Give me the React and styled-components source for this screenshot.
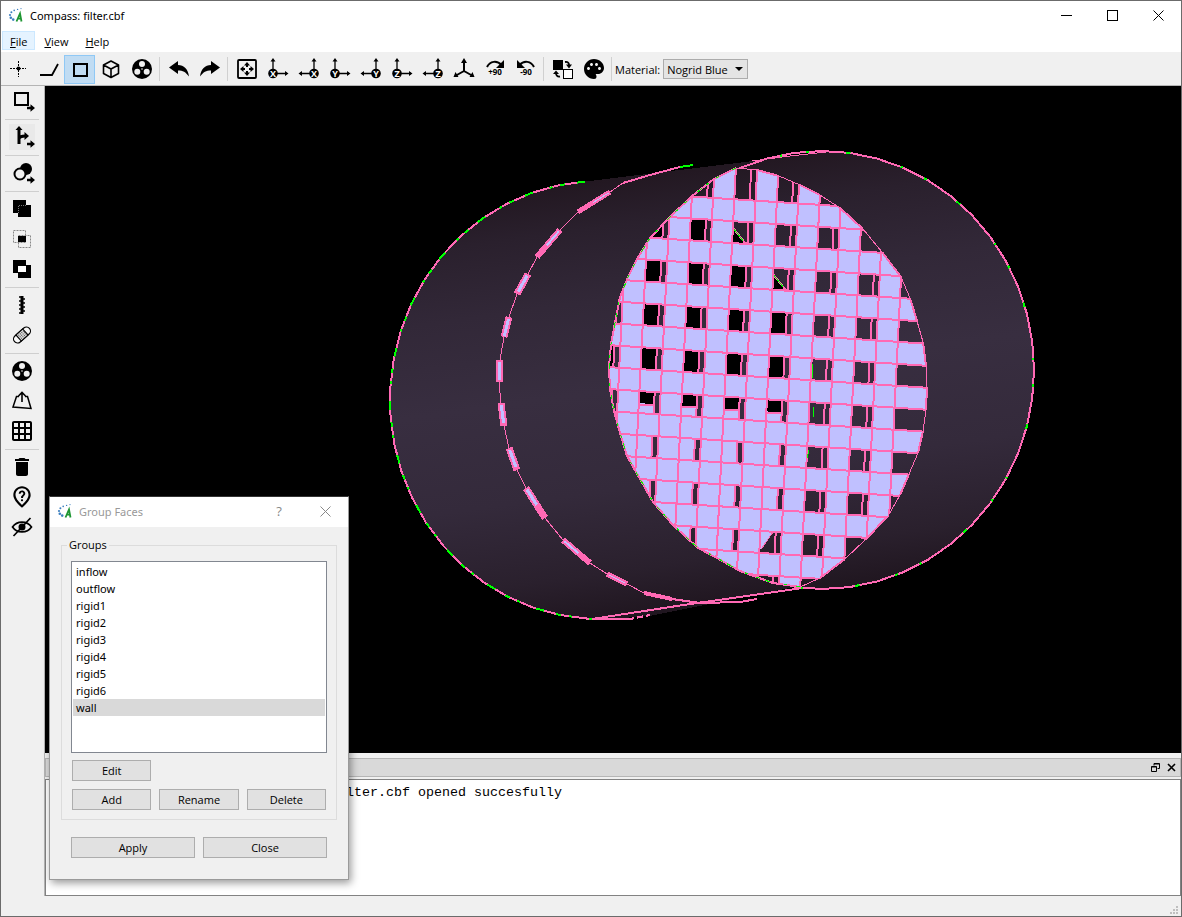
// src/App.jsx
import React, { useState } from 'react';
import styled, { createGlobalStyle } from 'styled-components';
import { MdPalette, MdDelete, MdGridOn, MdOutlineNotListedLocation } from 'react-icons/md';

const PINK = '#ff69b4';
const GREEN = '#00ff00';
const LILAC = '#c0c0ff';

/* ---------- icons ---------- */

const Icon = ({ children }) => (
  <svg width="24" height="24" viewBox="0 0 24 24" fill="none" stroke="#000" strokeWidth="2" overflow="visible" aria-hidden="true">
    {children}
  </svg>
);

const Logo = () => (
  <svg width="16" height="16" viewBox="0 0 16 16" aria-hidden="true">
    <g fill="#3c7fbf">
      <circle cx="5.2" cy="12.6" r="1.3" />
      <circle cx="2.8" cy="10.8" r="1.3" />
      <circle cx="2" cy="8" r="1.1" />
      <circle cx="3.4" cy="5.2" r="1" />
      <circle cx="6.2" cy="3.4" r=".8" />
      <circle cx="9.6" cy="2.4" r=".7" />
      <circle cx="13" cy="1.6" r=".6" />
    </g>
    <path d="M8.5 14.5L12 6.5L13.5 14.5M10 11.6H13" fill="none" stroke="#1e9632" strokeWidth="1.8" />
  </svg>
);

const PointIcon = () => (
  <Icon>
    <path d="M4 11.5h16M12.5 4v16" strokeWidth="1" strokeDasharray="2 1 2 1 5 1 2 1 2" />
    <circle cx="12.5" cy="11.5" r="2" fill="#000" stroke="none" />
  </Icon>
);
const LineIcon = () => <Icon><path d="M3 18h12L21 7" strokeWidth="1.8" /></Icon>;
const FaceIcon = () => <Icon><rect x="6" y="7" width="13" height="12" /></Icon>;
const CubeIcon = () => (
  <Icon>
    <path d="M12 4L19.5 8V16.5L12 20.5L4.5 16.5V8ZM4.5 8L12 12L19.5 8M12 12V20.5" strokeWidth="1.6" strokeLinejoin="round" />
  </Icon>
);
const GroupIcon = () => (
  <Icon>
    <circle cx="12" cy="12" r="10" fill="#000" stroke="none" />
    <g fill="#f0f0f0" stroke="none">
      <circle cx="12" cy="7" r="3" />
      <circle cx="7.3" cy="14.7" r="3" />
      <circle cx="16.7" cy="14.7" r="3" />
      <circle cx="12" cy="12" r=".8" />
    </g>
  </Icon>
);
const TurnIcon = ({ redo }) => (
  <Icon>
    <path
      transform={redo ? 'matrix(-1 0 0 1 24 0)' : undefined}
      d="M2 10.5L11 4V8C17 8 21 12 22 19.5C18.5 15 16 13.5 11 13.5V17Z"
      fill="#000"
      stroke="none"
    />
  </Icon>
);
const FitIcon = () => (
  <Icon>
    <rect x="3" y="3" width="18" height="18" rx="1" strokeWidth="1.8" />
    <path d="M12 5l3 3.5h-6zM12 19l3-3.5h-6zM5 12l3.5-3v6zM19 12l-3.5-3v6z" fill="#000" stroke="none" />
    <path d="M12 8v2M12 14v2M8 12h2M14 12h2" />
  </Icon>
);
const AxisIcon = ({ name, flip }) => (
  <Icon>
    <g transform={flip ? 'matrix(-1 0 0 1 24 0)' : undefined}>
      <path d="M7 16V3M7 16.5H21" strokeWidth="1.3" />
      <path d="M7 1l2.5 3.5h-5zM22.5 16.5L19 14v5z" fill="#000" stroke="none" />
      <circle cx="7" cy="16.5" r="4.8" fill="#000" stroke="none" />
    </g>
    <AxisName x={flip ? 17 : 7} y="20">{name}</AxisName>
  </Icon>
);
const IsoIcon = () => (
  <Icon>
    <path d="M12 14V4M12 14L4 18.5M12 14L20 18.5" />
    <path d="M12 1l3 5h-6zM1.5 20l2-5 3 5zM22.5 20l-2-5-3 5z" fill="#000" stroke="none" />
  </Icon>
);
const RotateIcon = ({ back }) => (
  <Icon>
    <g transform={back ? 'matrix(-1 0 0 1 24 0)' : undefined}>
      <path d="M4 10C7 4 14 3 18.5 8" />
      <path d="M21 3v8h-8z" fill="#000" stroke="none" />
    </g>
    <Degrees x="12" y="18">{back ? '-90' : '+90'}</Degrees>
  </Icon>
);
const SwapIcon = () => (
  <Icon>
    <rect x="2" y="3" width="10" height="10" fill="#000" stroke="none" />
    <rect x="12.5" y="12.5" width="9" height="9" fill="#fff" strokeWidth="1" />
    <path d="M14 5C17 4.5 18 6 18 8M9 19.5C6 20 5 18 5 16" strokeWidth="1.8" />
    <path d="M15 7.5h6l-3 4zM2 17h6l-3-3.5z" fill="#000" stroke="none" />
  </Icon>
);

const AddArrow = () => <path d="M17 17.7h3.5v-2.5l4.5 3.8-4.5 3.8v-2.5h-3.5z" fill="#000" stroke="none" />;
const AddFaceIcon = () => <Icon><rect x="5" y="4" width="13" height="12" /><AddArrow /></Icon>;
const BranchIcon = () => (
  <Icon>
    <path d="M9 19V4M9 13.5C10 11.5 12 11 15 11" strokeWidth="3" />
    <path d="M9 1l3.5 4h-7zM19 11L14.5 7v8z" fill="#000" stroke="none" />
    <AddArrow />
  </Icon>
);
const CirclesIcon = () => (
  <Icon>
    <circle cx="16" cy="8" r="6" fill="#000" stroke="none" />
    <circle cx="10" cy="13" r="5.5" fill="#f0f0f0" />
    <AddArrow />
  </Icon>
);
const UnionIcon = () => (
  <Icon>
    <path d="M3 3h13v5h5v12h-13v-4h-5z" fill="#000" stroke="none" />
    <path d="M8.5 16V8.5H16" stroke="#777" strokeWidth="1" strokeDasharray="1 1" />
  </Icon>
);
const IntersectIcon = () => (
  <Icon>
    <path d="M3.5 3.5h12v12h-12zM8.5 8.5h12v12h-12z" stroke="#888" strokeWidth="1" strokeDasharray="2 1" />
    <rect x="8" y="9" width="8" height="6" fill="#000" stroke="none" />
  </Icon>
);
const DifferenceIcon = () => (
  <Icon>
    <path d="M3 3h13v5h5v13h-13v-5h-5z" fill="#000" stroke="none" />
    <rect x="8" y="9" width="8" height="6" fill="#fff" stroke="none" />
  </Icon>
);
const SpringIcon = () => (
  <Icon>
    <path d="M12 3v18" strokeWidth="3" />
    <path d="M9 4h3M9 8h3M9 12h3M9 16h3M9 20h3M12 6h3M12 10h3M12 14h3M12 18h3" strokeWidth="1.6" />
  </Icon>
);
const BandageIcon = () => (
  <Icon>
    <g transform="rotate(-42 12 12)" strokeWidth="1.2">
      <rect x="2" y="8" width="20" height="8" rx="4" fill="#f8f8f8" />
      <rect x="7.5" y="8" width="9" height="8" fill="#ddd" />
      <path d="M9 10h7M9 12h7M9 14h7" stroke="#555" strokeDasharray="1 1" />
    </g>
  </Icon>
);
const ExtrudeIcon = () => (
  <Icon>
    <path d="M9 7.5H6.5L3 18L21 19.5L17.5 7.5H15" strokeWidth="1.5" />
    <path d="M12 13V4M8.5 7L12 3.5L15.5 7" strokeWidth="1.6" />
  </Icon>
);
const HideIcon = () => (
  <Icon>
    <path d="M2.5 12C7 5.5 17 5.5 21.5 12C17 18.5 7 18.5 2.5 12Z" strokeWidth="1.7" />
    <circle cx="12" cy="12" r="3.5" fill="#000" stroke="none" />
    <path d="M3.5 21L20.5 3" strokeWidth="1.7" />
  </Icon>
);

/* ---------- 3D model ---------- */

// faceted ellipse arc, angles in degrees
const arc = (cx, cy, rx, ry, from, to, step = 7.5) => {
  const pts = [];
  for (let a = from; a <= to; a += step) {
    const r = (a * Math.PI) / 180;
    pts.push([cx + rx * Math.cos(r), cy + ry * Math.sin(r)]);
  }
  return pts;
};
const join = (pts) => pts.map((p) => p.map((n) => n.toFixed(1)).join(',')).join(' ');

// point of the wire mesh for column k, row j
const mesh = (k, j) => {
  let y = 178.7 + 22 * j;
  let x = 0;
  for (let n = 0; n < 3; n++) {
    x = 599.3 + 21.33 * k - 0.05 * (y - 340);
    y = 178.7 + 22 * j + 0.065 * (x - 756.7);
  }
  return [x, y];
};
const quad = (k0, k1, j0, j1) => join([mesh(k0, j0), mesh(k1, j0), mesh(k1, j1), mesh(k0, j1)]);

const backRim = arc(600, 400, 210, 219, 86, 266);
const backTail = [[592, 619], [630, 619], [650, 615]];
const frontRim = arc(822, 370, 212, 219, -127.5, 97.5);
const shell = [...backRim, [835, 151], ...arc(822, 370, 212, 219, -82.5, 97.5), [650, 616]];

const filterRight = [
  [736, 168], [757, 170], [779, 176], [800, 185], [820, 195], [840, 208], [863, 229], [882, 252],
  [901, 277], [910, 298], [917, 321], [923, 342], [926, 366], [927, 387], [926, 410], [923, 431],
  [918, 453], [909, 474], [900, 495], [888, 516], [865, 540], [845, 559], [820, 578], [800, 587],
];
const filterLeft = [
  [800, 587], [773, 583], [740, 571], [717, 558], [698, 548], [673, 525], [653, 502], [640, 479],
  [627, 456], [620, 433], [614, 411], [610, 389], [609, 367], [611, 344], [615, 323], [620, 297],
  [628, 277], [637, 259], [650, 238], [670, 217], [692, 196], [714, 179], [736, 168],
];
// edges of the right side where a wire ends
const wireEnds = [1, 3, 5, 7, 9, 11, 13, 15, 17, 19, 21];

const ring = [
  [693, 165], [680, 167], [650, 175], [623, 183], [610, 192], [578, 212], [560, 230], [537, 257], [528, 274],
  [517, 294], [509, 317], [504, 337], [500, 360], [499, 382], [501, 403], [504, 426], [509, 448], [517, 470],
  [526, 488], [545, 518], [563, 540], [590, 563], [607, 574], [627, 584], [644, 593], [672, 599], [700, 603],
  [740, 602], [757, 599],
];
// [index in ring, width of the wire end]
const ringWires = [[4, 5], [6, 6], [8, 7], [10, 7], [12, 7], [14, 7], [16, 7], [18, 7], [20, 6], [22, 5], [24, 4]];

const holes = [];
for (let j = 0; j <= 18; j += 2) {
  for (let k = 0; k <= 14; k += 2) {
    let kind = 'dark';
    if ((j === 2 && k <= 4) || (j === 4 && k <= 6) || ((j === 6 || j === 8) && k <= 8)) kind = 'black';
    if (j === 10 && k <= 8) kind = 'half';
    if ((j === 12 || j === 14) && k <= 8) kind = 'wire';
    if (j === 16 && k <= 6) kind = 'wire';
    if ((j === 2 && k === 6) || (j === 4 && k === 8)) kind = 'corner';
    if (j === 16 && k === 8) kind = 'slant';
    holes.push({ j, k, kind });
  }
}

const Hole = ({ j, k, kind }) => {
  const top = j === 0 ? -2 : j;
  const open = k === 14 || (k === 12 && (j === 2 || j === 16));
  const [sx1, sy1] = mesh(k + 0.72, top);
  const [sx2, sy2] = mesh(k + 0.72, j + 1);
  return (
    <g>
      <polygon points={quad(k, open ? 16 : k + 1, top, j + 1)} fill="url(#shell)" />
      {kind === 'black' && <polygon points={quad(k, k + 0.7, j, j + 1)} fill="#000" />}
      {(kind === 'wire' || kind === 'half') && <polygon points={quad(k, k + 0.7, j, j + 1)} fill={LILAC} />}
      {kind === 'half' && (
        <>
          <polygon points={quad(k, k + 0.7, j, j + 0.55)} fill="#000" />
          <polyline points={join([mesh(k, j + 0.62), mesh(k + 0.7, j + 0.58)])} stroke={PINK} strokeWidth="2" />
        </>
      )}
      {kind === 'corner' && (
        <>
          <polygon points={join([mesh(k, j + 0.3), mesh(k + 0.65, j + 1), mesh(k, j + 1)])} fill="#000" />
          <polyline points={join([mesh(k, j + 0.3), mesh(k + 0.65, j + 1)])} stroke={PINK} strokeWidth="2" />
          <polyline points={join([mesh(k, j + 0.3), mesh(k + 0.5, j + 0.85)])} stroke={GREEN} />
        </>
      )}
      {kind === 'slant' && (
        <>
          <polygon points={join([mesh(k, j), mesh(k + 0.6, j), mesh(k + 0.1, j + 0.8), mesh(k, j + 0.8)])} fill={LILAC} />
          <polyline points={join([mesh(k + 0.6, j), mesh(k + 0.1, j + 0.8)])} stroke={PINK} />
        </>
      )}
      {!open && <line x1={sx1} y1={sy1} x2={sx2} y2={sy2} stroke={PINK} strokeWidth="2" />}
    </g>
  );
};

const Model = () => (
  <ModelSvg viewBox="45 86 1136 667" shapeRendering="crispEdges" fill="none" role="img" aria-label="filter.cbf">
    <defs>
      <linearGradient id="shell" gradientUnits="userSpaceOnUse" x1="690" y1="160" x2="752" y2="608">
        <stop offset="0" stopColor="#21161f" />
        <stop offset=".12" stopColor="#2a202d" />
        <stop offset=".28" stopColor="#322838" />
        <stop offset=".48" stopColor="#382e40" />
        <stop offset=".7" stopColor="#342a3b" />
        <stop offset=".88" stopColor="#2a202d" />
        <stop offset="1" stopColor="#1e141d" />
      </linearGradient>
      <clipPath id="filter"><polygon points={join([...filterRight, ...filterLeft])} /></clipPath>
    </defs>

    <polygon points={join(shell)} fill="url(#shell)" />

    <polyline points={join(backRim)} stroke={PINK} strokeWidth="2" />
    <polyline points={join(backRim)} stroke={GREEN} strokeWidth="2" strokeDasharray="5 12 9 17 3 8" />
    <polyline points={join(backTail)} stroke={PINK} strokeWidth="2" strokeDasharray="42 3 6 3" />
    <polyline points="592,619 690,604 803,588" stroke={PINK} strokeWidth="2" />

    <polyline points={join(ring)} stroke={PINK} />
    <polyline points={join(ring.slice(0, 4))} stroke={PINK} strokeWidth="2" />
    <polyline points={join(ring.slice(-4))} stroke={PINK} strokeWidth="2" />
    <polyline points="680,167 693,165" stroke={GREEN} strokeWidth="2" />
    {ringWires.map(([i, w]) => (
      <g key={i}>
        <polyline points={join(ring.slice(i, i + 2))} stroke={PINK} strokeWidth={w} />
        <polyline points={join(ring.slice(i, i + 2))} stroke={LILAC} strokeWidth={w - 4} strokeDasharray="0 2 18 200" />
      </g>
    ))}

    <polyline points={join(frontRim)} stroke={PINK} strokeWidth="2" />
    <polyline points={join(frontRim)} stroke={GREEN} strokeWidth="2" strokeDasharray="3 37 5 52 2 24" />
    <polyline points="752,161 790,156 835,151" stroke={PINK} />

    <g clipPath="url(#filter)">
      <rect x="600" y="160" width="335" height="435" fill={LILAC} />
      {holes.map((h) => <Hole key={`${h.j}-${h.k}`} {...h} />)}
      {Array.from({ length: 18 }, (_, i) => (
        <polyline key={i} points={join([mesh(-1, i + 1), mesh(16, i + 1)])} stroke={PINK} strokeWidth="2" />
      ))}
      {Array.from({ length: 14 }, (_, i) => (
        <polyline key={i} points={join([mesh(i + 1, -2), mesh(i + 1, 20)])} stroke={PINK} strokeWidth="2" />
      ))}
      <path d="M812 364l1 14M813 407l1 10M809 450l-2 8" stroke={GREEN} />
    </g>
    <polyline points={join(filterLeft)} stroke={PINK} strokeWidth="2" />
    <polyline points={join(filterLeft)} stroke={GREEN} strokeDasharray="4 9 3 14 6 5" />
    <polyline points={join(filterRight)} stroke={PINK} />
    {wireEnds.map((i) => (
      <polyline key={i} points={join(filterRight.slice(i, i + 2))} stroke={PINK} strokeWidth="2" />
    ))}
  </ModelSvg>
);

/* ---------- data ---------- */

const TOOLS = [
  [
    ['Select points', <PointIcon />], ['Select edges', <LineIcon />], ['Select faces', <FaceIcon />],
    ['Select solids', <CubeIcon />], ['Select groups', <GroupIcon />],
  ],
  [['Undo', <TurnIcon />], ['Redo', <TurnIcon redo />]],
  [
    ['Fit all', <FitIcon />],
    ['View +X', <AxisIcon name="X" />], ['View -X', <AxisIcon name="X" flip />],
    ['View +Y', <AxisIcon name="Y" />], ['View -Y', <AxisIcon name="Y" flip />],
    ['View +Z', <AxisIcon name="Z" />], ['View -Z', <AxisIcon name="Z" flip />],
    ['Isometric', <IsoIcon />], ['Rotate +90', <RotateIcon />], ['Rotate -90', <RotateIcon back />],
  ],
  [['Swap colors', <SwapIcon />], ['Palette', <MdPalette size={24} />]],
];

const SIDE_TOOLS = [
  [['Add face', <AddFaceIcon />]],
  [['Branch', <BranchIcon />]],
  [['Add shape', <CirclesIcon />]],
  [['Union', <UnionIcon />], ['Intersection', <IntersectIcon />], ['Difference', <DifferenceIcon />]],
  [['Sew', <SpringIcon />], ['Heal', <BandageIcon />]],
  [['Group faces', <GroupIcon />], ['Extrude', <ExtrudeIcon />], ['Mesh', <MdGridOn size={24} />]],
  [['Delete', <MdDelete size={24} />], ['Locate', <MdOutlineNotListedLocation size={26} />], ['Hide', <HideIcon />]],
];

const GROUPS = ['inflow', 'outflow', 'rigid1', 'rigid2', 'rigid3', 'rigid4', 'rigid5', 'rigid6', 'wall'];

const App = () => {
  const [mode, setMode] = useState('Select faces');
  const [group, setGroup] = useState('wall');
  const [material, setMaterial] = useState('Nogrid Blue');

  return (
    <>
      <GlobalStyle />
      <Window>
        <TitleBar>
          <Logo />
          <Title>Compass: filter.cbf</Title>
          <WindowButton aria-label="Minimize">
            <svg width="11" height="11"><path d="M0 5.5h11" stroke="#000" /></svg>
          </WindowButton>
          <WindowButton aria-label="Maximize">
            <svg width="11" height="11"><rect x=".5" y=".5" width="10" height="10" fill="none" stroke="#000" /></svg>
          </WindowButton>
          <WindowButton aria-label="Close">
            <svg width="11" height="11"><path d="M.5 .5l10 10M10.5 .5l-10 10" stroke="#000" /></svg>
          </WindowButton>
        </TitleBar>

        <MenuBar>
          <MenuItem $active><u>F</u>ile</MenuItem>
          <MenuItem><u>V</u>iew</MenuItem>
          <MenuItem><u>H</u>elp</MenuItem>
        </MenuBar>

        <ToolBar>
          {TOOLS.map((tools, i) => (
            <React.Fragment key={i}>
              {tools.map(([label, icon]) => (
                <ToolButton
                  key={label}
                  aria-label={label}
                  $active={mode === label}
                  onClick={() => label.startsWith('Select') && setMode(label)}
                >
                  {icon}
                </ToolButton>
              ))}
              <Separator />
            </React.Fragment>
          ))}
          <MaterialLabel htmlFor="material">Material:</MaterialLabel>
          <Combo>
            <ComboSelect id="material" value={material} onChange={(e) => setMaterial(e.target.value)}>
              <option>Nogrid Blue</option>
            </ComboSelect>
            <ComboArrow width="8" height="4"><path d="M0 0h8l-4 4z" /></ComboArrow>
          </Combo>
        </ToolBar>

        <Workspace>
          <SideBar>
            {SIDE_TOOLS.map((tools, i) => (
              <React.Fragment key={i}>
                {i > 0 && <SideSeparator />}
                {tools.map(([label, icon]) => (
                  <SideButton key={label} aria-label={label} $hover={label === 'Branch'}>{icon}</SideButton>
                ))}
              </React.Fragment>
            ))}
          </SideBar>

          <Main>
            <Viewport><Model /></Viewport>
            <DockTitle>
              <DockButton aria-label="Float">
                <svg width="9" height="9" fill="none" stroke="#000"><path d="M3 1h5.5M3 .5h5.5v5h-2M3 .5v2M.5 3.5h5v5h-5zM.5 4h5" /></svg>
              </DockButton>
              <DockButton aria-label="Close console">
                <svg width="9" height="9"><path d="M1 1l7 7M8 1l-7 7" stroke="#000" strokeWidth="1.6" /></svg>
              </DockButton>
            </DockTitle>
            <Console>filter.cbf opened succesfully</Console>
          </Main>
        </Workspace>

        <StatusBar>
          <svg width="9" height="9" fill="#bfbfbf">
            <path d="M6 0h2v2h-2zM3 3h2v2h-2zM6 3h2v2h-2zM0 6h2v2h-2zM3 6h2v2h-2zM6 6h2v2h-2z" />
          </svg>
        </StatusBar>

        <Dialog role="dialog" aria-label="Group Faces">
          <DialogTitle>
            <Logo />
            <Title $muted>Group Faces</Title>
            <DialogTitleButton>?</DialogTitleButton>
            <DialogTitleButton aria-label="Close dialog">
              <svg width="11" height="11"><path d="M.5 .5l10 10M10.5 .5l-10 10" stroke="#888" /></svg>
            </DialogTitleButton>
          </DialogTitle>
          <DialogBody>
            <GroupBox>
              <GroupLegend>Groups</GroupLegend>
              <List role="listbox" aria-label="Groups">
                {GROUPS.map((name) => (
                  <ListItem key={name} role="option" aria-selected={group === name} $selected={group === name} onClick={() => setGroup(name)}>
                    {name}
                  </ListItem>
                ))}
              </List>
              <ButtonGrid>
                <EditButton>Edit</EditButton>
                <Button>Add</Button>
                <Button>Rename</Button>
                <Button>Delete</Button>
              </ButtonGrid>
            </GroupBox>
            <DialogActions>
              <Button>Apply</Button>
              <Button>Close</Button>
            </DialogActions>
          </DialogBody>
        </Dialog>
      </Window>
    </>
  );
};

export default App;

const GlobalStyle = createGlobalStyle`
  * {
    box-sizing: border-box;
  }
  body {
    margin: 0;
    font-family: 'Open Sans', 'Noto Sans', sans-serif;
    font-size: 11px;
    color: #000;
  }
  button, select {
    font: inherit;
    color: inherit;
    padding: 0;
    border: none;
    background: none;
  }
  svg {
    flex-shrink: 0;
  }
`;

const AxisName = styled.text`
  font-size: 9px;
  font-weight: bold;
  text-anchor: middle;
  fill: #fff;
  stroke: none;
`;

const Degrees = styled.text`
  font-size: 8px;
  font-weight: bold;
  text-anchor: middle;
  fill: #000;
  stroke: none;
`;

const Window = styled.div`
  position: relative;
  display: flex;
  flex-direction: column;
  min-height: 100vh;
  border: 1px solid #6b6b6b;
  background: #f0f0f0;
`;

const TitleBar = styled.header`
  display: flex;
  align-items: center;
  height: 30px;
  padding: 0 0 2px 7px;
  background: #fff;
`;

const Title = styled.span`
  flex: 1;
  padding-left: 6px;
  font-family: 'Noto Sans', sans-serif;
  color: ${(props) => (props.$muted ? '#999' : '#000')};
`;

const WindowButton = styled.button`
  display: flex;
  align-items: center;
  justify-content: center;
  width: 46px;
  height: 28px;
`;

const MenuBar = styled.nav`
  display: flex;
  height: 22px;
  padding: 0 1px 2px;
  background: #fff;
  border-bottom: 1px solid #f0f0f0;
`;

const MenuItem = styled.button`
  padding: 2px 7px 0;
  margin-right: 1px;
  line-height: 16px;
  border: 1px solid ${(props) => (props.$active ? '#cce8ff' : 'transparent')};
  background: ${(props) => (props.$active ? '#e5f3ff' : 'transparent')};
`;

const ToolBar = styled.div`
  display: flex;
  align-items: center;
  height: 33px;
  padding-left: 1px;
  border-bottom: 1px solid #b4b4b4;
`;

const ToolButton = styled.button`
  display: flex;
  align-items: center;
  justify-content: center;
  width: 31px;
  height: 29px;
  border: 1px solid ${(props) => (props.$active ? '#8fc8f5' : 'transparent')};
  background: ${(props) => (props.$active ? '#c0dcf3' : 'transparent')};
`;

const Separator = styled.div`
  width: 1px;
  height: 24px;
  margin: 0 3px 0 2px;
  background: #d0d0d0;
`;

const MaterialLabel = styled.label`
  margin-right: 3px;
`;

const Combo = styled.div`
  position: relative;
`;

const ComboSelect = styled.select`
  appearance: none;
  display: block;
  width: 85px;
  height: 20px;
  padding-left: 3px;
  border: 1px solid #acacac;
  border-radius: 0;
  background: #e4e4e4;
`;

const ComboArrow = styled.svg`
  position: absolute;
  right: 5px;
  top: 8px;
  pointer-events: none;
`;

const Workspace = styled.div`
  flex: 1;
  display: flex;
`;

const SideBar = styled.div`
  display: flex;
  flex-direction: column;
  align-items: center;
  width: 44px;
  padding-right: 2px;
  border-right: 1px solid #b4b4b4;
`;

const SideButton = styled.button`
  display: flex;
  align-items: center;
  justify-content: center;
  width: 26px;
  height: 26px;
  margin: 2px 0;
  background: ${(props) => (props.$hover ? '#e9e9e9' : 'transparent')};
`;

const SideSeparator = styled.div`
  width: 34px;
  height: 1px;
  margin: 3px 0 2px;
  background: #cfcfcf;
`;

const Main = styled.main`
  flex: 1;
  display: flex;
  flex-direction: column;
  min-width: 0;
`;

const Viewport = styled.section`
  flex: 1;
  display: flex;
  min-height: 0;
  background: #000;
`;

const ModelSvg = styled.svg`
  flex: 1;
  width: 100%;
  min-width: 0;
`;

const DockTitle = styled.div`
  display: flex;
  align-items: center;
  justify-content: flex-end;
  gap: 7px;
  height: 19px;
  margin: 5px 0 2px;
  padding-right: 4px;
  border: 1px solid #b5b5b5;
  background: #d9d9d9;
`;

const DockButton = styled.button`
  display: flex;
`;

const Console = styled.output`
  height: 117px;
  padding: 5px 4px 4px 284px;
  border: 1px solid #828282;
  background: #fff;
  font-family: 'Liberation Mono', monospace;
  font-size: 10pt;
  line-height: 16px;
`;

const StatusBar = styled.footer`
  display: flex;
  align-items: flex-end;
  justify-content: flex-end;
  height: 20px;
  padding: 0 2px 1px;
`;

const Dialog = styled.div`
  position: absolute;
  left: 48px;
  bottom: 36px;
  width: 300px;
  border: 1px solid #9a9a9a;
  border-top-color: #333;
  background: #f0f0f0;
  box-shadow: 2px 3px 8px rgba(0, 0, 0, 0.4);
`;

const DialogTitle = styled.div`
  display: flex;
  align-items: center;
  height: 30px;
  padding: 0 0 2px 7px;
  background: #fff;
`;

const DialogTitleButton = styled(WindowButton)`
  color: #888;
  font-size: 13px;
`;

const DialogBody = styled.div`
  padding: 10px 11px 21px;
`;

const GroupBox = styled.fieldset`
  margin: 0;
  padding: 8px 9px 9px;
  border: 1px solid #dcdcdc;
`;

const GroupLegend = styled.legend`
  padding: 0 2px;
  margin-left: -4px;
  line-height: 16px;
`;

const List = styled.ul`
  height: 192px;
  margin: 0;
  padding: 1px;
  list-style: none;
  border: 1px solid #828790;
  background: #fff;
  font-family: 'Noto Sans', sans-serif;
`;

const ListItem = styled.li`
  padding-left: 3px;
  line-height: 17px;
  background: ${(props) => (props.$selected ? '#d9d9d9' : 'transparent')};
`;

const Button = styled.button`
  height: 21px;
  border: 1px solid #adadad;
  background: #e1e1e1;
`;

const ButtonGrid = styled.div`
  display: grid;
  grid-template-columns: repeat(3, 1fr);
  gap: 8px;
  padding: 7px 1px 0;
`;

const EditButton = styled(Button)`
  & + button {
    grid-column: 1 / 2;
  }
`;

const DialogActions = styled.div`
  display: grid;
  grid-template-columns: repeat(2, 1fr);
  gap: 8px;
  padding: 17px 10px 0;
`;
